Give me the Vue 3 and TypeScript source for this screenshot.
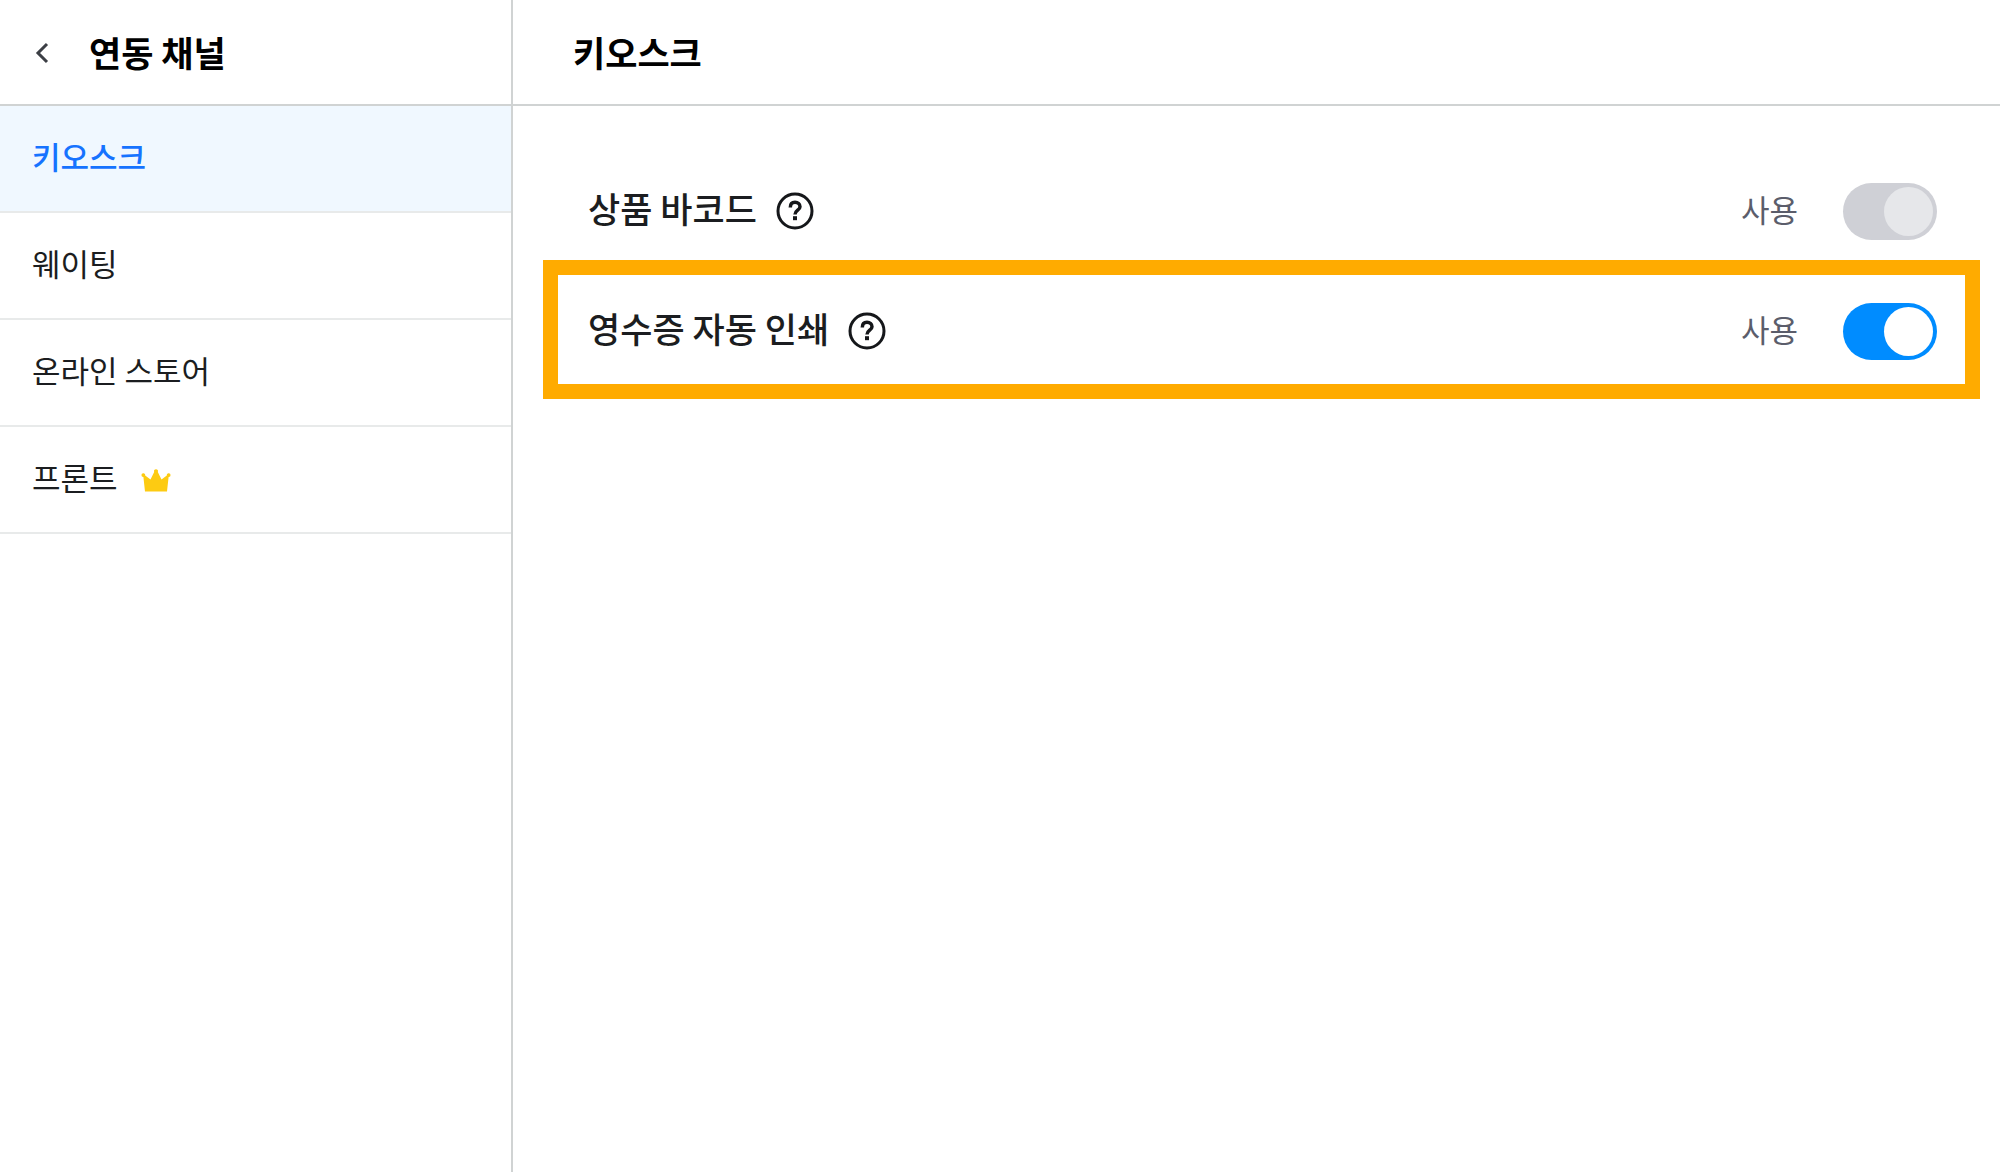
<script setup lang="ts">
import { ref } from 'vue'

interface Channel {
  id: string
  name: string
  premium?: boolean
}

interface Setting {
  id: string
  name: string
  enabled: boolean
  locked?: boolean
  highlighted?: boolean
}

const channels: Channel[] = [
  { id: 'kiosk', name: '키오스크' },
  { id: 'waiting', name: '웨이팅' },
  { id: 'store', name: '온라인 스토어' },
  { id: 'front', name: '프론트', premium: true },
]

const current = ref('kiosk')

const settings = ref<Setting[]>([
  { id: 'barcode', name: '상품 바코드', enabled: true, locked: true },
  { id: 'receipt', name: '영수증 자동 인쇄', enabled: true, highlighted: true },
])
</script>

<template>
  <div class="app">
    <aside class="sidebar">
      <header class="bar side-bar">
        <button class="back" type="button" aria-label="뒤로">
          <svg width="16" height="24" viewBox="0 0 16 24" fill="none" stroke="#3c3f45" stroke-width="3">
            <path d="M13 4 4 13l9 9" />
          </svg>
        </button>
        <h2 class="title">연동 채널</h2>
      </header>
      <nav>
        <a
          v-for="channel in channels"
          :key="channel.id"
          href="#"
          class="channel"
          :class="{ active: channel.id === current }"
          @click.prevent="current = channel.id"
        >
          <span class="channel-name">{{ channel.name }}</span>
          <svg v-if="channel.premium" class="crown" width="32" height="24" viewBox="0 0 32 24" fill="#fdcb12">
            <path d="M5 23.500 3.400 9A1.900 1.900 0 1 1 5.200 7.500L10.500 11.500 14.200 4A2 2 0 1 1 17.800 4L21.500 11.500 26.800 7.500A1.900 1.900 0 1 1 28.600 9L27 23.500Z" />
          </svg>
        </a>
      </nav>
    </aside>

    <main class="content">
      <header class="bar main-bar">
        <h1 class="title">키오스크</h1>
      </header>
      <ul class="settings">
        <li
          v-for="setting in settings"
          :key="setting.id"
          class="setting"
          :class="{ highlighted: setting.highlighted }"
        >
          <span class="name">{{ setting.name }}</span>
          <button class="help" type="button" :aria-label="setting.name + ' 도움말'">
            <svg width="38" height="38" viewBox="0 0 38 38" fill="none" stroke="#15171a" stroke-width="3">
              <circle cx="19" cy="19" r="17" />
              <path d="M14.300 15.500C14.300 12 16 10.300 19 10.300S24 12.200 24 14.800C24 18.200 19 18.300 19 22.400" stroke-width="3.500" />
              <path d="M17 24.200h4v4h-4z" fill="#15171a" stroke="none" />
            </svg>
          </button>
          <label class="state" :for="setting.id">사용</label>
          <input
            :id="setting.id"
            v-model="setting.enabled"
            class="toggle"
            type="checkbox"
            role="switch"
            :disabled="setting.locked"
          />
        </li>
      </ul>
    </main>
  </div>
</template>

<style>
body {
  margin: 0;
  background: #fff;
}
</style>

<style scoped>
.app {
  display: flex;
  min-height: 100vh;
  font-family: "Noto Sans CJK KR", "Noto Sans KR", sans-serif;
  color: #1b1d20;
}

.sidebar {
  box-sizing: border-box;
  flex: none;
  width: 513px;
  border-right: 2px solid #d0d3d3;
}

.bar {
  display: flex;
  align-items: center;
  height: 104px;
  border-bottom: 2px solid #d0d3d3;
}

.side-bar {
  gap: 39px;
  padding-left: 34px;
}

.main-bar {
  padding-left: 60px;
}

.back,
.help {
  display: flex;
  padding: 0;
  border: 0;
  background: none;
  cursor: pointer;
}

.title {
  margin: 0;
  font-size: 35px;
  line-height: 52px;
  font-weight: 600;
  color: #000;
}

.channel {
  box-sizing: border-box;
  display: flex;
  align-items: center;
  gap: 22px;
  height: 107px;
  padding-left: 32px;
  border-bottom: 2px solid #e8eaea;
  font-size: 31px;
  line-height: 46px;
  color: inherit;
  text-decoration: none;
}

.channel-name,
.name {
  padding-bottom: 6px;
}

.channel.active {
  background: #f0f8ff;
  color: #1673ff;
  font-weight: 500;
}

.content {
  flex: 1;
  min-width: 0;
}

.settings {
  margin: 0;
  padding: 45px 63px 0 75px;
  list-style: none;
}

.setting {
  position: relative;
  display: flex;
  align-items: center;
  height: 120px;
}

.setting.highlighted::after {
  content: "";
  position: absolute;
  inset: -11px -43px -8px -45px;
  border: 15px solid #ffab00;
  pointer-events: none;
}

.name {
  margin-right: 19px;
  font-size: 35px;
  line-height: 52px;
  font-weight: 500;
}

.state {
  margin-left: auto;
  margin-right: 45px;
  padding-bottom: 4px;
  font-size: 31px;
  line-height: 46px;
  color: #5b5d6b;
}

.toggle {
  appearance: none;
  display: flex;
  align-items: center;
  box-sizing: border-box;
  width: 94px;
  height: 57px;
  margin: 0;
  padding: 4px;
  border-radius: 29px;
  background: #cfd1d6;
  cursor: pointer;
}

.toggle::before {
  content: "";
  width: 49px;
  height: 49px;
  border-radius: 50%;
  background: #fff;
}

.toggle:checked {
  justify-content: flex-end;
  background: #008cff;
}

.toggle:disabled {
  background: #cfd0d6;
  cursor: default;
}

.toggle:disabled::before {
  background: #e6e7ea;
}
</style>
